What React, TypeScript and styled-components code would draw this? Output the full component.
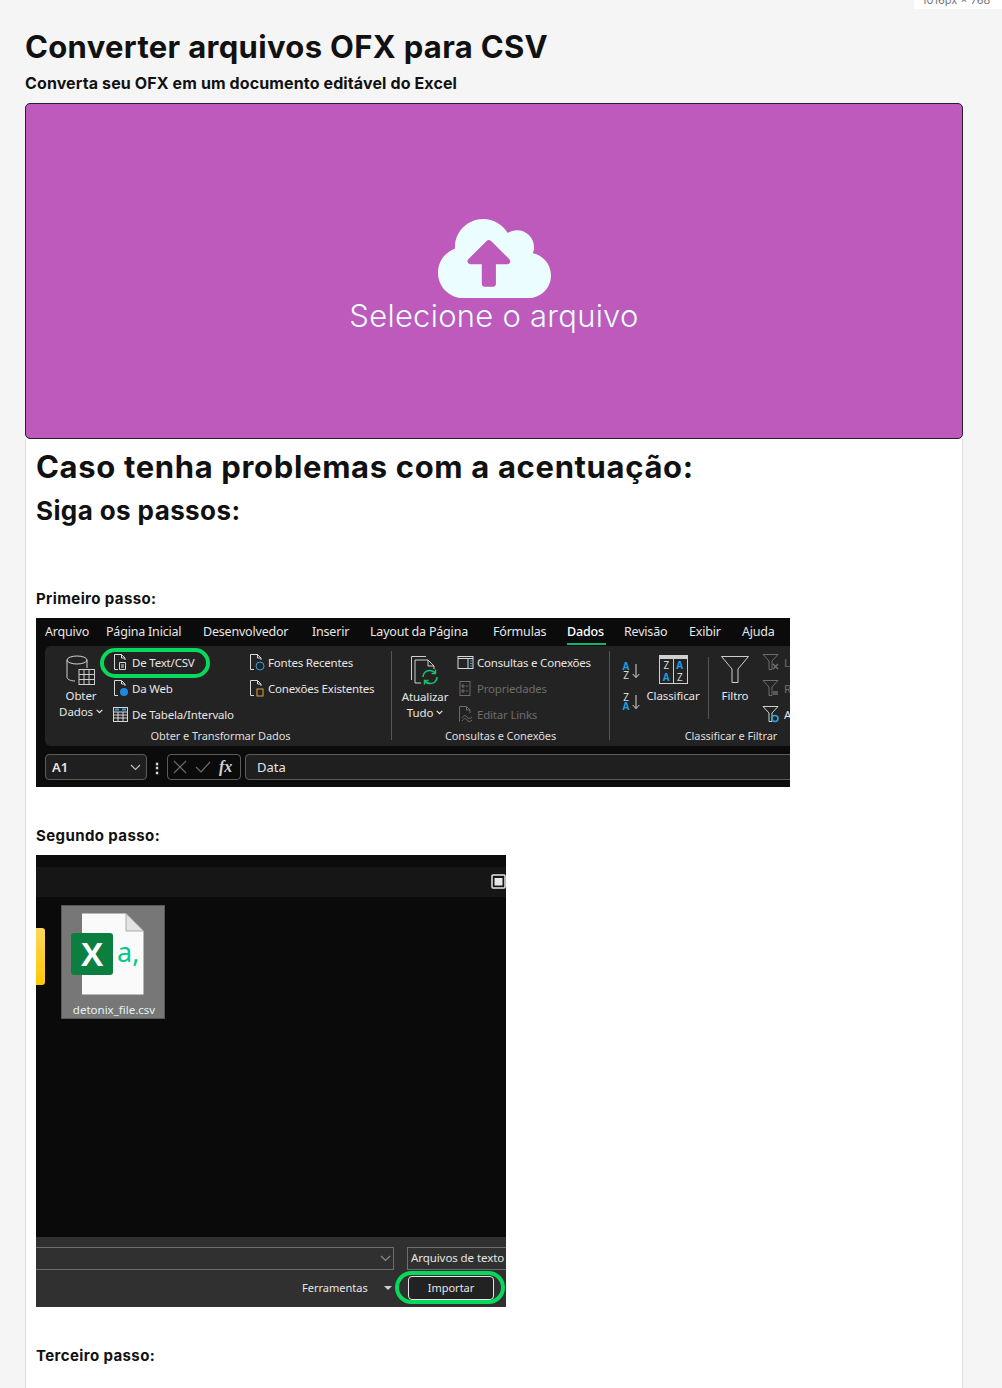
import React from 'react';
import styled, { createGlobalStyle } from 'styled-components';
import { FaCloudUploadAlt } from 'react-icons/fa';

const GlobalStyle = createGlobalStyle`
  html, body {
    margin: 0;
    padding: 0;
    background: #f5f5f5;
  }
`;

const tabs = [
  { label: 'Arquivo', width: 61 },
  { label: 'Página Inicial', width: 97 },
  { label: 'Desenvolvedor', width: 109 },
  { label: 'Inserir', width: 58 },
  { label: 'Layout da Página', width: 123 },
  { label: 'Fórmulas', width: 74 },
  { label: 'Dados', width: 57, active: true },
  { label: 'Revisão', width: 65 },
  { label: 'Exibir', width: 53 },
  { label: 'Ajuda', width: 48 },
];

const DocIcon = ({ children }: { children?: React.ReactNode }) => (
  <svg width="17" height="18" viewBox="0 0 17 18" fill="none" stroke="#d8d8d8" strokeWidth="1">
    <path d="M2.5 16.5V1.5H9.5L13 5V7M9.5 1.5V5H13M2.5 16.5H6" />
    {children}
  </svg>
);

const TableIcon = () => (
  <svg width="17" height="17" viewBox="0 0 17 17" fill="none" stroke="#d8d8d8" strokeWidth="1">
    <rect x="1.5" y="1.5" width="14" height="14" />
    <path d="M1.5 6H15.5M1.5 9H15.5M1.5 12H15.5M6 6V15.5M11 6V15.5" />
    <path d="M3 3.5H7M10 3.5H14" stroke="#2aa5e0" strokeWidth="2" />
  </svg>
);

const DataIcon = () => (
  <svg width="30" height="31" viewBox="0 0 30 31" fill="none" stroke="#cfcfcf" strokeWidth="1">
    <ellipse cx="11" cy="5" rx="10" ry="4" />
    <path d="M1 5V22C1 24 4 26 9 26M21 5V13" />
    <rect x="13" y="14.5" width="15.5" height="15" fill="#222" />
    <path d="M13 19.5H28.5M13 24.5H28.5M18 14.5V29.5M23 14.5V29.5" />
  </svg>
);

const RefreshIcon = () => (
  <svg width="30" height="31" viewBox="0 0 30 31" fill="none" stroke="#cfcfcf" strokeWidth="1">
    <path d="M1.5 25V1.5H16M5 28V5H18L24 11V14M18 5V11H24M5 28H11" />
    <path d="M13 22C13 18 16 15.5 19.5 15.5C22 15.5 24 16.5 25 18M27 22C27 26 24 28.5 20.5 28.5C18 28.5 16 27.5 15 26" stroke="#14c46c" strokeWidth="1.6" />
    <path d="M25.5 14.5V18.5H21.5M14.5 29.5V25.5H18.5" stroke="#14c46c" strokeWidth="1.4" />
  </svg>
);

const PanelIcon = () => (
  <svg width="17" height="15" viewBox="0 0 17 15" fill="none" stroke="#d8d8d8" strokeWidth="1">
    <rect x="1" y="1.5" width="15" height="12" />
    <path d="M1 3.5H16M11 3.5V13.5" />
    <path d="M13 6H15M13 8.5H15M13 11H15" stroke="#2aa5e0" />
  </svg>
);

const PropsIcon = () => (
  <svg width="17" height="17" viewBox="0 0 17 17" fill="none" stroke="#6c6c6c" strokeWidth="1">
    <rect x="3" y="1.5" width="10" height="14" />
    <path d="M5 5H7V7H5ZM5 10H7V12H5ZM9 6H11M9 11H11" />
  </svg>
);

const SortArrow = () => (
  <svg width="8" height="16" viewBox="0 0 8 16" fill="none" stroke="#d8d8d8" strokeWidth="1">
    <path d="M4 1V14.5M0.7 11L4 14.5L7.3 11" />
  </svg>
);

const SortIcon = ({ top, bottom }: { top: string; bottom: string }) => (
  <SortRow>
    <SortLetters>
      <SortLetter $blue={top === 'A'}>{top}</SortLetter>
      <SortLetter $blue={bottom === 'A'}>{bottom}</SortLetter>
    </SortLetters>
    <SortArrow />
  </SortRow>
);

const ClassifyIcon = () => (
  <ClassifyBox>
    <SortLetter>Z</SortLetter>
    <SortLetter $blue>A</SortLetter>
    <SortLetter $blue>A</SortLetter>
    <SortLetter>Z</SortLetter>
  </ClassifyBox>
);

const FunnelIcon = () => (
  <svg width="30" height="29" viewBox="0 0 30 29" fill="none" stroke="#cfcfcf" strokeWidth="1">
    <path d="M1.5 1.5H28.5L18 14V27.5H12V14Z" />
  </svg>
);

const SmallFunnelIcon = ({ mark, color, markColor }: { mark: string; color: string; markColor?: string }) => (
  <svg width="18" height="18" viewBox="0 0 18 18" fill="none" stroke={color} strokeWidth="1">
    <path d="M1 1.5H16L10 8V16.5H7V8Z" />
    <path d={mark} stroke={markColor || color} strokeWidth="1.6" />
  </svg>
);

const CheckIcon = () => (
  <svg width="16" height="14" viewBox="0 0 16 14" fill="none" stroke="#6c6c6c" strokeWidth="1.2">
    <path d="M1 7L6 12L15 2" />
  </svg>
);

const CrossIcon = () => (
  <svg width="14" height="14" viewBox="0 0 14 14" fill="none" stroke="#6c6c6c" strokeWidth="1.2">
    <path d="M1 1L13 13M13 1L1 13" />
  </svg>
);

const ChevronIcon = ({ color = '#bdbdbd' }: { color?: string }) => (
  <svg width="11" height="7" viewBox="0 0 11 7" fill="none" stroke={color} strokeWidth="1.2">
    <path d="M1 1L5.5 5.5L10 1" />
  </svg>
);

const TinyChevron = () => (
  <svg width="7" height="5" viewBox="0 0 7 5" fill="none" stroke="#e6e6e6" strokeWidth="1.2">
    <path d="M0.7 0.8L3.5 3.6L6.3 0.8" />
  </svg>
);

const ExcelFileIcon = () => (
  <svg width="74" height="82" viewBox="0 0 74 82" fill="none">
    <path d="M11 0.5H55L72.5 18V81.5H11Z" fill="#fafafa" />
    <path d="M55 0.5V18H72.5Z" fill="#e4e4e4" stroke="#9a9a9a" strokeWidth="0.8" />
    <rect x="0" y="20" width="42" height="42" rx="3" fill="#0b7f3f" />
    <text x="21" y="53" textAnchor="middle" fontFamily="Liberation Sans, sans-serif" fontSize="34" fontWeight="700" fill="#ffffff">X</text>
    <text x="46" y="49" fontFamily="Noto Sans, sans-serif" fontSize="27" fill="#00c98d">a,</text>
  </svg>
);

export default function App() {
  return (
    <Page>
      <GlobalStyle />
      <SizeBadge>1016px × 768</SizeBadge>
      <Title>Converter arquivos OFX para CSV</Title>
      <Subtitle>Converta seu OFX em um documento editável do Excel</Subtitle>
      <DropZone>
        <FaCloudUploadAlt size={113} color="#ebfdff" />
        <DropText>Selecione o arquivo</DropText>
      </DropZone>
      <Card>
        <CardTitle>Caso tenha problemas com a acentuação:</CardTitle>
        <CardSubtitle>Siga os passos:</CardSubtitle>

        <StepLabel $top={62}>Primeiro passo:</StepLabel>
        <Ribbon>
          <TabRow>
            {tabs.map((tab) => (
              <Tab key={tab.label} $width={tab.width} $active={tab.active}>
                <TabText $active={tab.active}>{tab.label}</TabText>
              </Tab>
            ))}
          </TabRow>
          <RibbonPanel>
            <Group $width={346}>
              <GroupBody>
                <BigButton $left={14} $width={44}>
                  <DataIcon />
                  <BigLabel>Obter</BigLabel>
                  <BigLabel>Dados <TinyChevron /></BigLabel>
                </BigButton>
                <ItemList $left={9} $width={136}>
                  <Item $ring>
                    <DocIcon><path d="M7.5 9.5H13.5V16.5H7.5ZM9 12H12M9 14H12" /></DocIcon>De Text/CSV
                  </Item>
                  <Item>
                    <DocIcon><circle cx="12" cy="13" r="4" fill="#1e88e5" stroke="none" /></DocIcon>Da Web
                  </Item>
                  <Item><TableIcon />De Tabela/Intervalo</Item>
                </ItemList>
                <ItemList $left={0} $width={140}>
                  <Item>
                    <DocIcon><circle cx="12" cy="13" r="4" stroke="#2aa5e0" /></DocIcon>Fontes Recentes
                  </Item>
                  <Item>
                    <DocIcon><rect x="9" y="10" width="6" height="7" stroke="#e8a33d" /></DocIcon>Conexões Existentes
                  </Item>
                </ItemList>
              </GroupBody>
              <GroupLabel $shift={5}>Obter e Transformar Dados</GroupLabel>
            </Group>
            <GroupDivider />
            <Group $width={217}>
              <GroupBody>
                <BigButton $left={10} $width={46} $iconGap={3}>
                  <RefreshIcon />
                  <BigLabel>Atualizar</BigLabel>
                  <BigLabel>Tudo <TinyChevron /></BigLabel>
                </BigButton>
                <ItemList $left={9} $width={150}>
                  <Item><PanelIcon />Consultas e Conexões</Item>
                  <Item $disabled><PropsIcon />Propriedades</Item>
                  <Item $disabled>
                    <svg width="17" height="18" viewBox="0 0 17 18" fill="none" stroke="#6c6c6c" strokeWidth="1">
                      <path d="M2.5 16.5V1.5H9.5L13 5V8M9.5 1.5V5H13M5 13C7 10 9 10 10 12C11 14 13 14 15 12M5 16C7 13 9 13 10 15C11 17 13 17 15 15" />
                    </svg>
                    Editar Links
                  </Item>
                </ItemList>
              </GroupBody>
              <GroupLabel>Consultas e Conexões</GroupLabel>
            </Group>
            <GroupDivider />
            <Group $width={242}>
              <GroupBody>
                <SortColumn>
                  <SortIcon top="A" bottom="Z" />
                  <SortIcon top="Z" bottom="A" />
                </SortColumn>
                <BigButton $left={0} $width={54} $iconGap={4}>
                  <ClassifyIcon />
                  <BigLabel>Classificar</BigLabel>
                </BigButton>
                <InnerDivider />
                <BigButton $left={4} $width={44} $iconGap={4}>
                  <FunnelIcon />
                  <BigLabel>Filtro</BigLabel>
                </BigButton>
                <ItemList $left={5} $width={40}>
                  <Item $disabled $tight><SmallFunnelIcon mark="M11 11L16 16M16 11L11 16" color="#6c6c6c" />L</Item>
                  <Item $disabled $tight><SmallFunnelIcon mark="M11 13H16M11 15H16" color="#6c6c6c" />R</Item>
                  <Item $tight><SmallFunnelIcon mark="M10 13.5A3 3 0 1 0 16 13.5A3 3 0 1 0 10 13.5Z" color="#cfcfcf" markColor="#2aa5e0" />A</Item>
                </ItemList>
              </GroupBody>
              <GroupLabel>Classificar e Filtrar</GroupLabel>
            </Group>
          </RibbonPanel>
          <FormulaRow>
            <NameBox>A1<ChevronIcon /></NameBox>
            <Dots>⋮</Dots>
            <FormulaButtons>
              <CrossIcon />
              <CheckIcon />
              <FxMark>fx</FxMark>
            </FormulaButtons>
            <FormulaInput>Data</FormulaInput>
          </FormulaRow>
        </Ribbon>

        <StepLabel $top={39}>Segundo passo:</StepLabel>
        <ImportDialog>
          <DialogTopStrip />
          <DialogBar>
            <svg width="15" height="15" viewBox="0 0 15 15" fill="none" stroke="#e6e6e6" strokeWidth="1.5">
              <rect x="1" y="1" width="13" height="13" rx="1" />
              <rect x="3.5" y="4" width="8" height="7.5" fill="#e6e6e6" stroke="none" />
            </svg>
          </DialogBar>
          <DialogBody>
            <FolderTab />
            <FileThumb>
              <ExcelFileIcon />
              <FileName>detonix_file.csv</FileName>
            </FileThumb>
          </DialogBody>
          <DialogFooter>
            <FooterRow>
              <PathSelect><ChevronIcon color="#8a8a8a" /></PathSelect>
              <TypeSelect>Arquivos de texto</TypeSelect>
            </FooterRow>
            <ActionRow>
              <ToolsLabel>Ferramentas</ToolsLabel>
              <ToolsCaret />
              <ImportButton>Importar</ImportButton>
            </ActionRow>
          </DialogFooter>
        </ImportDialog>

        <StepLabel $top={39}>Terceiro passo:</StepLabel>
      </Card>
    </Page>
  );
}

const Page = styled.div`
  position: relative;
  height: 1388px;
  overflow: hidden;
  padding: 0 39px 0 25px;
  background: #f5f5f5;
  font-family: Inter, "Liberation Sans", sans-serif;
  color: #111;
  box-sizing: border-box;
`;

const SizeBadge = styled.div`
  position: absolute;
  top: 0;
  right: 0;
  width: 88px;
  height: 9px;
  overflow: hidden;
  background: #fff;
  font-size: 11px;
  line-height: 1px;
  color: #777;
  padding-left: 8px;
  box-sizing: border-box;
  white-space: nowrap;
`;

const Title = styled.h1`
  margin: 0;
  padding-top: 28px;
  font-size: 31px;
  line-height: 38px;
  font-weight: 700;
  letter-spacing: 0.33px;
`;

const Subtitle = styled.h2`
  margin: 7px 0 0;
  font-size: 16px;
  line-height: 20px;
  font-weight: 700;
  letter-spacing: 0.12px;
`;

const DropZone = styled.div`
  margin-top: 10px;
  height: 336px;
  box-sizing: border-box;
  padding-bottom: 7px;
  border: 1px solid #2e1a2d;
  border-radius: 5px;
  background: #bd5abb;
  display: flex;
  flex-direction: column;
  align-items: center;
  justify-content: center;

  svg {
    display: block;
  }
`;

const DropText = styled.div`
  margin-top: -17px;
  font-size: 31px;
  line-height: 36px;
  font-weight: 300;
  letter-spacing: 0.25px;
  color: #ebfdff;
`;

const Card = styled.div`
  height: 960px;
  box-sizing: border-box;
  background: #fff;
  border: 1px solid #ddd;
  border-top: 0;
  border-radius: 0 0 5px 5px;
  padding: 10px 11px 0 10px;
`;

const CardTitle = styled.h2`
  margin: 0;
  font-size: 31px;
  line-height: 36px;
  font-weight: 700;
  letter-spacing: 0.66px;
`;

const CardSubtitle = styled.h3`
  margin: 10px 0 0;
  font-size: 26px;
  line-height: 32px;
  font-weight: 700;
  letter-spacing: 0.4px;
`;

const StepLabel = styled.div<{ $top: number }>`
  margin: ${(p) => p.$top}px 0 9px;
  font-size: 15px;
  line-height: 20px;
  font-weight: 700;
  letter-spacing: 0.4px;
`;

const Ribbon = styled.div`
  width: 754px;
  height: 169px;
  overflow: hidden;
  background: #0b0b0b;
  color: #e6e6e6;
  font-family: "Noto Sans", sans-serif;
  font-size: 12px;
`;

const TabRow = styled.div`
  display: flex;
  height: 28px;
  padding-left: 9px;
`;

const Tab = styled.div<{ $width: number; $active?: boolean }>`
  flex: 0 0 ${(p) => p.$width}px;
  line-height: 27px;
  font-size: 12.5px;
  letter-spacing: -0.2px;
  font-weight: ${(p) => (p.$active ? 500 : 400)};
  color: ${(p) => (p.$active ? '#ffffff' : '#e6e6e6')};
`;

const TabText = styled.span<{ $active?: boolean }>`
  display: inline-block;
  height: 25px;
  padding-right: 2px;
  border-bottom: ${(p) => (p.$active ? '2px solid #10b56a' : '0')};
`;

const RibbonPanel = styled.div`
  display: flex;
  width: 960px;
  height: 100px;
  margin-left: 9px;
  background: #232323;
  border-radius: 6px 0 0 6px;
`;

const Group = styled.div<{ $width: number }>`
  flex: 0 0 ${(p) => p.$width}px;
  display: flex;
  flex-direction: column;
`;

const GroupBody = styled.div`
  flex: 1;
  display: flex;
  padding-top: 3px;
`;

const GroupLabel = styled.div<{ $shift?: number }>`
  height: 19px;
  padding-left: ${(p) => p.$shift ?? 0}px;
  line-height: 17px;
  text-align: center;
  font-size: 11px;
  letter-spacing: -0.08px;
  color: #dedede;
`;

const GroupDivider = styled.div`
  flex: 0 0 1px;
  margin: 5px 0 6px;
  background: #565656;
`;

const InnerDivider = styled.div`
  flex: 0 0 1px;
  height: 62px;
  margin: 8px 0 0 8px;
  background: #565656;
`;

const BigButton = styled.div<{ $left: number; $width: number; $iconGap?: number }>`
  flex: 0 0 ${(p) => p.$width}px;
  min-width: 0;
  margin-left: ${(p) => p.$left}px;
  display: flex;
  flex-direction: column;
  align-items: center;
  padding-top: 6px;

  > svg,
  > div:first-child {
    flex: none;
    margin-bottom: ${(p) => p.$iconGap ?? 2}px;
  }
`;

const BigLabel = styled.div`
  height: 16px;
  line-height: 16px;
  white-space: nowrap;
  font-size: 11.5px;
  letter-spacing: -0.1px;

  svg {
    vertical-align: 2px;
  }
`;

const ItemList = styled.div<{ $left: number; $width: number }>`
  flex: 0 0 ${(p) => p.$width}px;
  min-width: 0;
  margin-left: ${(p) => p.$left}px;
  display: flex;
  flex-direction: column;
`;

const Item = styled.div<{ $ring?: boolean; $disabled?: boolean; $tight?: boolean }>`
  position: relative;
  flex: 0 0 26px;
  display: flex;
  align-items: center;
  gap: ${(p) => (p.$tight ? 4 : 3)}px;
  white-space: nowrap;
  font-size: 11.5px;
  letter-spacing: -0.2px;
  color: ${(p) => (p.$disabled ? '#6c6c6c' : '#e6e6e6')};

  svg {
    flex: none;
  }

  ${(p) =>
    p.$ring &&
    `
    &::after {
      content: '';
      position: absolute;
      top: -1px;
      bottom: -3px;
      left: -12px;
      right: 38px;
      border: 4px solid #08d85c;
      border-radius: 15px;
    }
  `}
`;

const SortColumn = styled.div`
  flex: 0 0 24px;
  margin-left: 12px;
  display: flex;
  flex-direction: column;
  gap: 14px;
  padding-top: 13px;
`;

const SortRow = styled.div`
  display: flex;
  align-items: center;
  gap: 2px;
  height: 17px;
`;

const SortLetters = styled.div`
  flex: 0 0 8px;
  display: flex;
  flex-direction: column;
`;

const SortLetter = styled.span<{ $blue?: boolean }>`
  display: block;
  height: 9px;
  overflow: visible;
  text-align: center;
  font-size: 10px;
  line-height: 9px;
  font-weight: ${(p) => (p.$blue ? 700 : 400)};
  color: ${(p) => (p.$blue ? '#1e9be0' : '#d8d8d8')};
`;

const ClassifyBox = styled.div`
  width: 29px;
  height: 29px;
  box-sizing: border-box;
  display: grid;
  grid-template-columns: 1fr 1fr;
  grid-template-rows: 1fr 1fr;
  align-items: center;
  padding: 1px 0 0;
  border: 1px solid #cfcfcf;
  border-top: 4px solid #cfcfcf;
  background: linear-gradient(#cfcfcf, #cfcfcf) center / 1px 100% no-repeat;
`;

const FormulaRow = styled.div`
  display: flex;
  align-items: center;
  height: 26px;
  margin: 8px 0 0 9px;
`;

const NameBox = styled.div`
  flex: 0 0 102px;
  height: 26px;
  box-sizing: border-box;
  display: flex;
  align-items: center;
  justify-content: space-between;
  padding: 0 5px 0 6px;
  border: 1px solid #5c5c5c;
  border-radius: 4px;
  background: #1f1f1f;
  font-size: 13px;
  font-weight: 600;
`;

const Dots = styled.div`
  flex: 0 0 20px;
  text-align: center;
  font-size: 14px;
  font-weight: 700;
`;

const FormulaButtons = styled.div`
  flex: 0 0 74px;
  height: 26px;
  box-sizing: border-box;
  display: flex;
  align-items: center;
  gap: 8px;
  padding-left: 5px;
  border: 1px solid #5c5c5c;
  border-radius: 4px;
`;

const FxMark = styled.span`
  font-family: "Liberation Serif", serif;
  font-style: italic;
  font-weight: 700;
  font-size: 16px;
  color: #d0d0d0;
`;

const FormulaInput = styled.div`
  flex: 0 0 600px;
  height: 26px;
  box-sizing: border-box;
  margin-left: 4px;
  padding-left: 11px;
  line-height: 24px;
  font-size: 13px;
  border: 1px solid #5c5c5c;
  border-radius: 4px;
  background: #1f1f1f;
`;

const ImportDialog = styled.div`
  width: 470px;
  height: 452px;
  display: flex;
  flex-direction: column;
  background: #0a0a0a;
  font-family: "Noto Sans", sans-serif;
  color: #e6e6e6;
`;

const DialogTopStrip = styled.div`
  flex: 0 0 12px;
  background: #0c0c0c;
`;

const DialogBar = styled.div`
  flex: 0 0 30px;
  box-sizing: border-box;
  display: flex;
  align-items: center;
  justify-content: flex-end;
  padding-bottom: 2px;
  background: #161616;
`;

const DialogBody = styled.div`
  flex: 1;
  display: flex;
  align-items: flex-start;
`;

const FolderTab = styled.div`
  flex: 0 0 9px;
  height: 57px;
  margin-top: 31px;
  border-radius: 0 3px 3px 0;
  background: linear-gradient(#ffd75e, #ffc800);
`;

const FileThumb = styled.div`
  flex: 0 0 104px;
  height: 114px;
  box-sizing: border-box;
  margin: 8px 0 0 16px;
  padding: 7px 0 0 9px;
  background: #777777;
  border: 1px solid #565656;

  svg {
    display: block;
  }
`;

const FileName = styled.div`
  margin: 8px 0 0 -7px;
  text-align: center;
  font-size: 11.5px;
  line-height: 14px;
  color: #e4f4f4;
`;

const DialogFooter = styled.div`
  flex: 0 0 70px;
  display: flex;
  flex-direction: column;
  background: #303030;
`;

const FooterRow = styled.div`
  display: flex;
  height: 23px;
  margin-top: 10px;
`;

const PathSelect = styled.div`
  flex: 0 0 358px;
  box-sizing: border-box;
  display: flex;
  align-items: center;
  justify-content: flex-end;
  padding-right: 2px;
  border: 1px solid #6e6e6e;
  border-left: 0;
`;

const TypeSelect = styled.div`
  flex: 0 0 99px;
  margin-left: 13px;
  box-sizing: border-box;
  padding-left: 3px;
  line-height: 19px;
  font-size: 11.5px;
  letter-spacing: -0.08px;
  white-space: nowrap;
  overflow: hidden;
  border: 1px solid #6e6e6e;
  border-right: 0;
`;

const ActionRow = styled.div`
  display: flex;
  align-items: center;
  height: 24px;
  margin-top: 6px;
  padding-left: 266px;
  font-size: 11px;
`;

const ToolsLabel = styled.div`
  flex: 0 0 82px;
  margin-top: -2px;
`;

const ToolsCaret = styled.div`
  flex: none;
  width: 0;
  height: 0;
  border-left: 4px solid transparent;
  border-right: 4px solid transparent;
  border-top: 4px solid #d0d0d0;
`;

const ImportButton = styled.div`
  position: relative;
  flex: 0 0 86px;
  height: 24px;
  box-sizing: border-box;
  margin-left: 16px;
  text-align: center;
  line-height: 22px;
  border: 1px solid #e6e6e6;
  border-radius: 4px;
  background: #222;

  &::after {
    content: '';
    position: absolute;
    top: -6px;
    bottom: -5px;
    left: -14px;
    right: -12px;
    border: 4px solid #08d85c;
    border-radius: 18px;
  }
`;
